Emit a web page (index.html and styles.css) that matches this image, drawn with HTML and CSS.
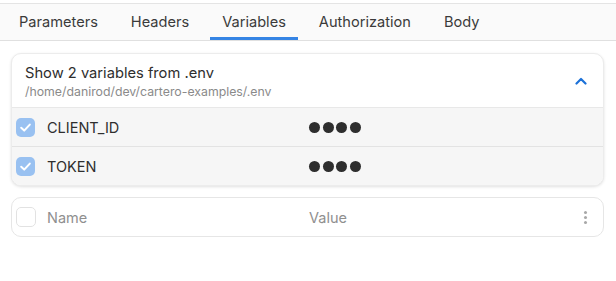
FILE: index.html
```html
<!DOCTYPE html>
<html>
<head>
<meta charset="utf-8">
<link rel="stylesheet" href="styles.css">
</head>
<body>
<div class="tabs">
  <div class="tab">Parameters</div>
  <div class="tab">Headers</div>
  <div class="tab active">Variables</div>
  <div class="tab">Authorization</div>
  <div class="tab">Body</div>
</div>
<div class="content">
  <div class="card env">
    <div class="env-head">
      <div class="env-text">
        <div class="env-title">Show 2 variables from .env</div>
        <div class="env-sub">/home/danirod/dev/cartero-examples/.env</div>
      </div>
      <svg class="chev" width="12" height="8" viewBox="0 0 12 8"><path d="M1.5 6.5 L6 2 L10.5 6.5" fill="none" stroke="#1c71d8" stroke-width="2.2" stroke-linecap="round" stroke-linejoin="round"/></svg>
    </div>
    <div class="row">
      <span class="check on"><svg width="19" height="19" viewBox="0 0 19 19"><path d="M5.2 9.8 L8.2 12.6 L13.8 6.6" fill="none" stroke="#fff" stroke-width="2" stroke-linecap="round" stroke-linejoin="round"/></svg></span>
      <span class="name">CLIENT_ID</span>
      <span class="dots"><i></i><i></i><i></i><i></i></span>
    </div>
    <div class="row">
      <span class="check on"><svg width="19" height="19" viewBox="0 0 19 19"><path d="M5.2 9.8 L8.2 12.6 L13.8 6.6" fill="none" stroke="#fff" stroke-width="2" stroke-linecap="round" stroke-linejoin="round"/></svg></span>
      <span class="name">TOKEN</span>
      <span class="dots"><i></i><i></i><i></i><i></i></span>
    </div>
  </div>
  <div class="card new">
    <span class="check off"></span>
    <span class="name ph">Name</span>
    <span class="value ph">Value</span>
    <span class="kebab"><i></i><i></i><i></i></span>
  </div>
</div>
</body>
</html>
```
FILE: styles.css
```css
html, body {
  margin: 0;
  padding: 0;
  background: #ffffff;
  font-family: Inter, "Noto Sans", sans-serif;
  color: #2e2e2e;
}
.tabs {
  margin-top: 3px;
  background: #fafafa;
  border-top: 1px solid #e4e4e4;
  border-bottom: 1px solid #e0e0e0;
  display: flex;
  gap: 9px;
  padding-left: 7px;
  box-sizing: border-box;
  height: 38px;
}
.tab {
  padding: 0 12px;
  font-size: 14.6px;
  color: #3a3a3a;
  display: flex;
  align-items: center;
  border-bottom: 3px solid transparent;
  padding-top: 2px;
}
.tab.active {
  border-bottom-color: #3584e4;
}
.content {
  padding: 12px 12px 0 11px;
  display: flex;
  flex-direction: column;
  gap: 11px;
}
.card {
  border-radius: 10px;
  border: 1px solid #e6e6e6;
  background: #fff;
  overflow: hidden;
}
.env {
  box-shadow: 0 1px 3px rgba(0,0,0,0.12);
  border-color: #ececec;
}
.env-head {
  height: 53px;
  display: flex;
  align-items: center;
  padding: 0 16px 0 13px;
  border-bottom: 1px solid #e8e8e8;
}
.env-text {
  flex: 1;
  display: flex;
  flex-direction: column;
  gap: 2px;
  padding-top: 2px;
}
.env-title {
  font-size: 14.7px;
  color: #2e2e2e;
}
.env-sub {
  font-size: 12.3px;
  color: #8a8a8a;
}
.chev { display: block; }
.row {
  height: 38px;
  background: #f6f6f6;
  display: flex;
  align-items: center;
  padding-left: 4px;
}
.row + .row { border-top: 1px solid #e3e3e3; }
.check {
  width: 19px;
  height: 19px;
  border-radius: 5px;
  box-sizing: border-box;
  flex: none;
  display: block;
}
.check svg { display: block; }
.check.on { background: #99c1f1; }
.check.off {
  background: #fff;
  border: 1px solid #e2e2e2;
  width: 20px;
  height: 20px;
}
.name {
  font-size: 14.5px;
  width: 262px;
  margin-left: 12px;
  color: #2e2e2e;
}
.dots { display: flex; gap: 2.5px; }
.dots i {
  width: 11px;
  height: 11px;
  border-radius: 50%;
  background: #2e2e2e;
  display: block;
}
.new {
  height: 38px;
  display: flex;
  align-items: center;
  padding-left: 4px;
  padding-right: 16px;
}
.new .name { margin-left: 11px; }
.ph { color: #8f8f8f; font-size: 14.5px; }
.value { flex: 1; }
.kebab { display: flex; flex-direction: column; gap: 2px; }
.kebab i {
  width: 3px; height: 3px; border-radius: 50%;
  background: #a8a8a8; display: block;
}
```
